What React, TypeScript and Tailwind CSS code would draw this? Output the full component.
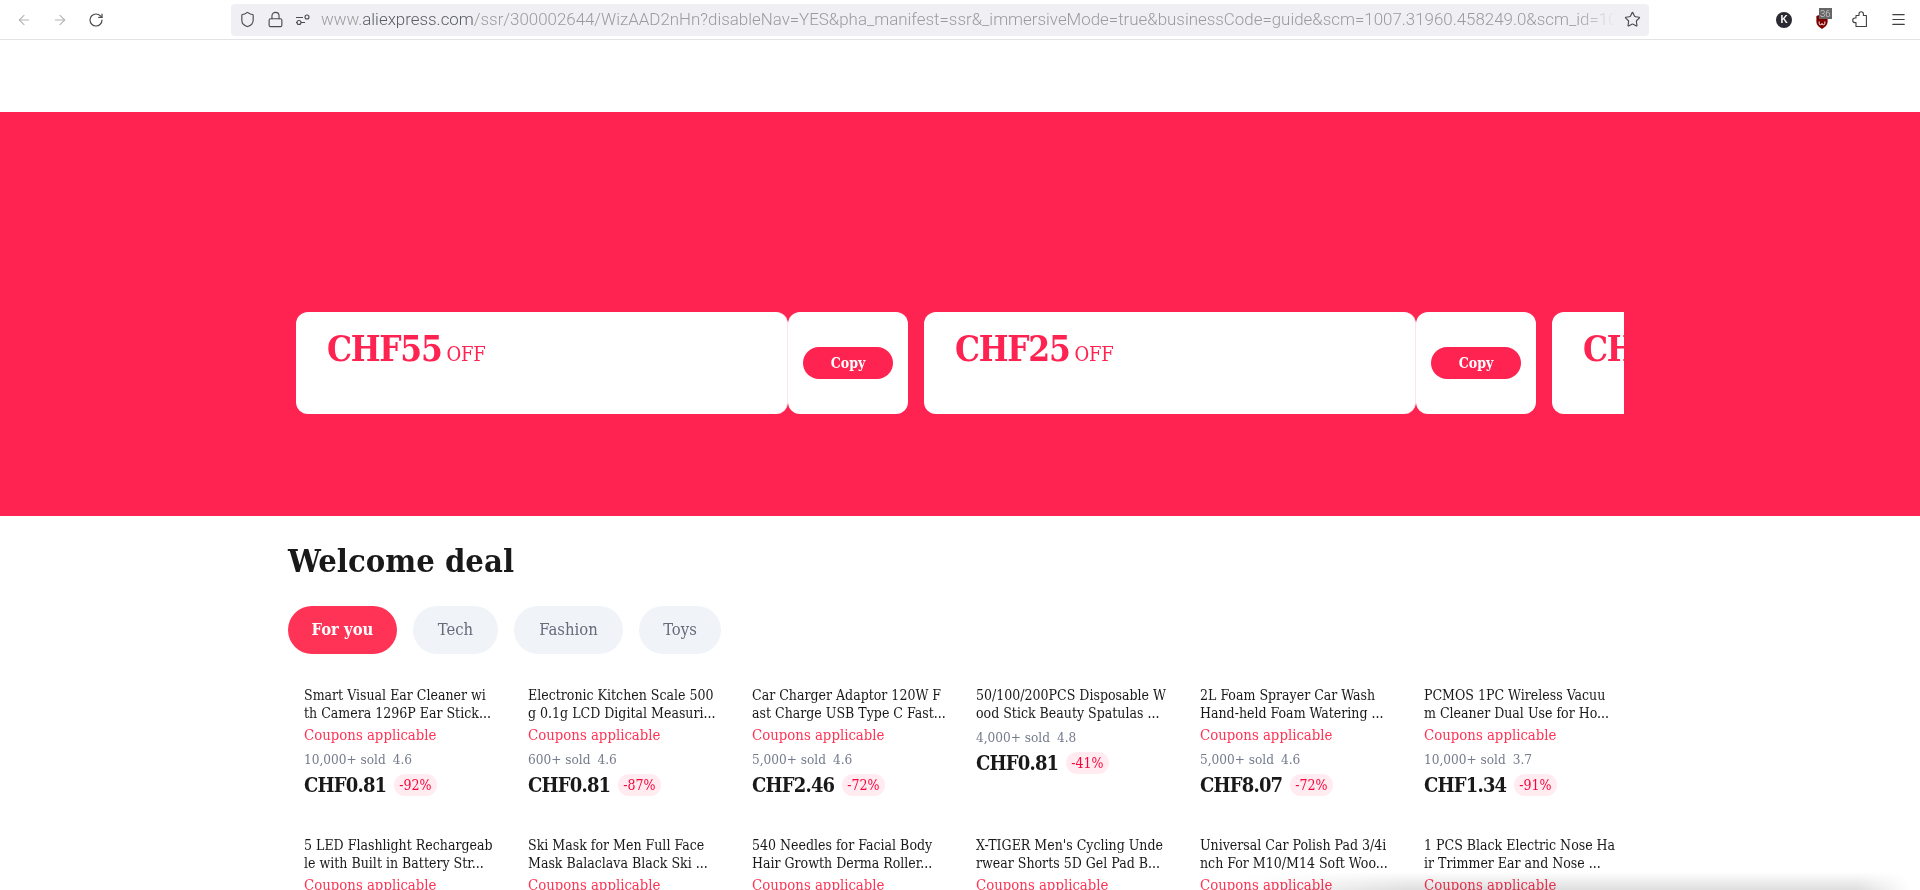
import { ArrowLeft, ArrowRight, Lock, Menu, RotateCw, Shield, Star } from "lucide-react";

type Product = {
  lines: [string, string];
  coupon?: boolean;
  sold?: string;
  rating?: string;
  price?: string;
  off?: string;
};

const products: Product[] = [
  { lines: ["Smart Visual Ear Cleaner wi", "th Camera 1296P Ear Stick..."], coupon: true, sold: "10,000+ sold", rating: "4.6", price: "CHF0.81", off: "-92%" },
  { lines: ["Electronic Kitchen Scale 500", "g 0.1g LCD Digital Measuri..."], coupon: true, sold: "600+ sold", rating: "4.6", price: "CHF0.81", off: "-87%" },
  { lines: ["Car Charger Adaptor 120W F", "ast Charge USB Type C Fast..."], coupon: true, sold: "5,000+ sold", rating: "4.6", price: "CHF2.46", off: "-72%" },
  { lines: ["50/100/200PCS Disposable W", "ood Stick Beauty Spatulas ..."], sold: "4,000+ sold", rating: "4.8", price: "CHF0.81", off: "-41%" },
  { lines: ["2L Foam Sprayer Car Wash", "Hand-held Foam Watering ..."], coupon: true, sold: "5,000+ sold", rating: "4.6", price: "CHF8.07", off: "-72%" },
  { lines: ["PCMOS 1PC Wireless Vacuu", "m Cleaner Dual Use for Ho..."], coupon: true, sold: "10,000+ sold", rating: "3.7", price: "CHF1.34", off: "-91%" },
  { lines: ["5 LED Flashlight Rechargeab", "le with Built in Battery Str..."], coupon: true },
  { lines: ["Ski Mask for Men Full Face", "Mask Balaclava Black Ski ..."], coupon: true },
  { lines: ["540 Needles for Facial Body", "Hair Growth Derma Roller..."], coupon: true },
  { lines: ["X-TIGER Men's Cycling Unde", "rwear Shorts 5D Gel Pad B..."], coupon: true },
  { lines: ["Universal Car Polish Pad 3/4i", "nch For M10/M14 Soft Woo..."], coupon: true },
  { lines: ["1 PCS Black Electric Nose Ha", "ir Trimmer Ear and Nose ..."], coupon: true },
];

function Coupon({ amount }: { amount: string }) {
  return (
    <div className="flex shrink-0">
      <div className="w-[492px] h-[102px] bg-white rounded-[12px] pl-[31px] pt-[15px] flex items-baseline border-r border-[#ffe3ea]">
        <span className="text-[35px] leading-[44px] font-bold tracking-[-1.3px] text-[#ff2351]">{amount}</span>
        <span className="ml-[5px] text-[20px] tracking-[-0.3px] text-[#ff2351]">OFF</span>
      </div>
      <div className="w-[120px] h-[102px] bg-white rounded-[12px] flex items-center justify-center">
        <button className="w-[90px] h-[32px] rounded-full bg-[#ff2351] text-white text-[14px] font-bold">Copy</button>
      </div>
    </div>
  );
}

function ProductCard({ p }: { p: Product }) {
  return (
    <div className="h-[150px] pl-[16px] pt-[6px]">
      <div className="text-[14px] leading-[18px] text-[#191919] whitespace-nowrap">
        <div>{p.lines[0]}</div>
        <div>{p.lines[1]}</div>
      </div>
      {p.coupon && <div className="mt-[4px] text-[14.8px] leading-[18px] text-[#ff3355]">Coupons applicable</div>}
      {p.sold && (
        <div className="mt-[6px] text-[13.5px] leading-[18px] text-[#757b8c] flex gap-[7px]">
          <span>{p.sold}</span>
          <span>{p.rating}</span>
        </div>
      )}
      {p.price && (
        <div className="mt-[5px] flex items-center gap-[8px]">
          <span className="text-[20px] leading-[24px] font-bold tracking-[-0.8px] text-[#191919]">{p.price}</span>
          <span className="h-[22px] px-[5px] rounded-full bg-[#ffebf0] text-[14px] leading-[22px] text-[#f5053c]">{p.off}</span>
        </div>
      )}
    </div>
  );
}

export default function App() {
  return (
    <div className="h-[890px] overflow-hidden bg-white relative font-['DejaVu_Serif_Condensed','DejaVu_Serif',serif]">
      {/* browser toolbar */}
      <div className="h-[40px] border-b border-[#e3e3e5] flex items-center font-['Roboto',sans-serif]">
        <div className="w-[231px] flex items-center pl-[16px] gap-[20px] text-[#b4b4b6]">
          <ArrowLeft size={16} strokeWidth={1.6} />
          <ArrowRight size={16} strokeWidth={1.6} />
          <RotateCw size={16} strokeWidth={1.8} className="text-[#4a4a4f]" />
        </div>
        <div className="w-[1418px] h-[32px] bg-[#f0f0f4] rounded-[4px] flex items-center pl-[8px] pr-[8px] text-[#4a4a4f]">
          <Shield size={17} strokeWidth={1.6} />
          <Lock size={17} strokeWidth={1.6} className="ml-[11px]" />
          <svg width="16" height="16" viewBox="0 0 16 16" fill="none" stroke="currentColor" strokeWidth="1.1" className="ml-[11px]">
            <path d="M1 5.5h7M1 10.5h9" />
            <circle cx="12" cy="5" r="2" />
            <circle cx="4" cy="10.5" r="2" fill="#f0f0f4" />
          </svg>
          <div className="ml-[10px] flex-1 overflow-hidden whitespace-nowrap text-[16.9px] font-light text-[#9b9b9f] [mask-image:linear-gradient(to_right,black_97%,transparent)]">
            www.<span className="text-[#5b5b66]">aliexpress.com</span>/ssr/300002644/WizAAD2nHn?disableNav=YES&amp;pha_manifest=ssr&amp;_immersiveMode=true&amp;businessCode=guide&amp;scm=1007.31960.458249.0&amp;scm_id=10
          </div>
          <Star size={17} strokeWidth={1.6} className="ml-[8px]" />
        </div>
        <div className="flex items-center ml-[127px] text-[#3f3f44]">
          <div className="w-[16px] h-[16px] rounded-full bg-[#2b2a33] text-white text-[10px] font-bold leading-[16px] text-center font-['Liberation_Sans',sans-serif]">K</div>
          <div className="relative ml-[23px] w-[16px] h-[16px]">
            <svg width="14" height="15" viewBox="0 0 14 16" className="absolute left-0 top-[2px]">
              <path d="M7 0l6 2v6c0 4-3 6-6 8-3-2-6-4-6-8V2z" fill="#800000" />
              <path d="M4 8v2a1.5 1.5 0 0 0 3 0a1.5 1.5 0 0 0 3 0V8" fill="none" stroke="#fff" strokeWidth="1" />
            </svg>
            <span className="absolute left-[4px] -top-[4px] h-[11px] px-[1px] bg-[#666] text-[#ddd] text-[9.5px] leading-[11px] font-light">36</span>
          </div>
          <svg width="16" height="17" viewBox="0 0 16 17" fill="none" stroke="currentColor" strokeWidth="1.1" strokeLinejoin="round" className="ml-[21px]">
            <path d="M7 4.5V3a2.2 2.2 0 0 1 4.4 0v1.5h3v11H4V11.6H3a2.3 2.3 0 0 1 0-4.6h1V4.5z" />
          </svg>
          <Menu size={17} strokeWidth={1.7} className="ml-[22px]" />
        </div>
      </div>

      <div className="h-[72px]" />

      {/* coupon banner */}
      <div className="h-[404px] bg-[#ff2351] pt-[200px] pl-[296px]">
        <div className="w-[1328px] h-[102px] overflow-hidden flex gap-[16px]">
          <Coupon amount="CHF55" />
          <Coupon amount="CHF25" />
          <Coupon amount="CHF15" />
        </div>
      </div>

      {/* welcome deal */}
      <div className="pl-[288px] w-[1640px]">
        <h1 className="mt-[25px] text-[32.5px] leading-[40px] font-bold text-[#191919]">Welcome deal</h1>
        <div className="mt-[25px] flex gap-[16px] text-[16.5px] text-[#666b7a]">
          <div className="h-[48px] w-[109px] rounded-full bg-[#ff3355] text-white font-bold flex items-center justify-center">For you</div>
          <div className="h-[48px] w-[85px] rounded-full bg-[#f0f3f8] flex items-center justify-center">Tech</div>
          <div className="h-[48px] w-[109px] rounded-full bg-[#f0f3f8] flex items-center justify-center">Fashion</div>
          <div className="h-[48px] w-[82px] rounded-full bg-[#f0f3f8] flex items-center justify-center">Toys</div>
        </div>
        <div className="mt-[26px] grid grid-cols-[repeat(6,224px)]">
          {products.map((p) => (
            <ProductCard key={p.lines[0]} p={p} />
          ))}
        </div>
      </div>

      {/* shadow at bottom of the viewport */}
      <div className="absolute left-[1240px] right-[10px] bottom-0 h-[18px] mix-blend-multiply bg-gradient-to-t from-[#dedede] to-transparent [mask-image:linear-gradient(to_right,transparent,black_25%,black_92%,transparent)]" />
    </div>
  );
}
